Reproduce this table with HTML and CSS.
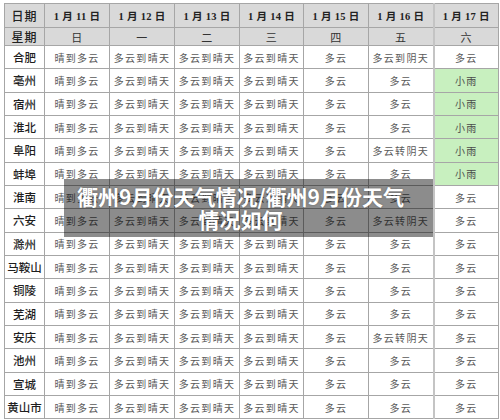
FILE: index.html
```html
<!DOCTYPE html>
<html lang="zh-CN">
<head>
<meta charset="utf-8">
<title>衢州9月份天气情况</title>
<link rel="stylesheet" href="styles.css">
</head>
<body>
<div class="page">
  <table class="weather">
    <colgroup>
      <col class="c-city">
      <col class="c-day"><col class="c-day"><col class="c-day"><col class="c-day4">
      <col class="c-day"><col class="c-day"><col class="c-day">
    </colgroup>
    <thead>
      <tr class="r-date">
        <th class="label">日期</th>
        <th>1 月 11 日</th><th>1 月 12 日</th><th>1 月 13 日</th><th>1 月 14 日</th>
        <th>1 月 15 日</th><th>1 月 16 日</th><th class="last">1 月 17 日</th>
      </tr>
      <tr class="r-week">
        <th class="label">星期</th>
        <th>日</th><th>一</th><th>二</th><th>三</th><th>四</th><th>五</th><th class="last">六</th>
      </tr>
    </thead>
    <tbody>
      <tr><th>合肥</th><td>晴到多云</td><td>多云到晴天</td><td>多云到晴天</td><td>多云到晴天</td><td>多云</td><td>多云到阴天</td><td class="last">多云</td></tr>
      <tr><th>亳州</th><td>晴到多云</td><td>多云到晴天</td><td>多云到晴天</td><td>多云到晴天</td><td>多云</td><td>多云</td><td class="last rain">小雨</td></tr>
      <tr><th>宿州</th><td>晴到多云</td><td>多云到晴天</td><td>多云到晴天</td><td>多云到晴天</td><td>多云</td><td>多云</td><td class="last rain">小雨</td></tr>
      <tr><th>淮北</th><td>晴到多云</td><td>多云到晴天</td><td>多云到晴天</td><td>多云到晴天</td><td>多云</td><td>多云</td><td class="last rain">小雨</td></tr>
      <tr><th>阜阳</th><td>晴到多云</td><td>多云到晴天</td><td>多云到晴天</td><td>多云到晴天</td><td>多云</td><td>多云转阴天</td><td class="last rain">小雨</td></tr>
      <tr><th>蚌埠</th><td>晴到多云</td><td>多云到晴天</td><td>多云到晴天</td><td>多云到晴天</td><td>多云</td><td>多云</td><td class="last rain">小雨</td></tr>
      <tr><th>淮南</th><td>晴到多云</td><td>多云到晴天</td><td>多云到晴天</td><td>多云到晴天</td><td>多云</td><td>多云</td><td class="last">多云</td></tr>
      <tr><th>六安</th><td>晴到多云</td><td>多云到晴天</td><td>多云到晴天</td><td>多云到晴天</td><td>多云</td><td>多云转阴天</td><td class="last">多云</td></tr>
      <tr><th>滁州</th><td>晴到多云</td><td>多云到晴天</td><td>多云到晴天</td><td>多云到晴天</td><td>多云</td><td>多云</td><td class="last">多云</td></tr>
      <tr><th>马鞍山</th><td>晴到多云</td><td>多云到晴天</td><td>多云到晴天</td><td>多云到晴天</td><td>多云</td><td>多云</td><td class="last">多云</td></tr>
      <tr><th>铜陵</th><td>晴到多云</td><td>多云到晴天</td><td>多云到晴天</td><td>多云到晴天</td><td>多云</td><td>多云</td><td class="last">多云</td></tr>
      <tr><th>芜湖</th><td>晴到多云</td><td>多云到晴天</td><td>多云到晴天</td><td>多云到晴天</td><td>多云</td><td>多云</td><td class="last">多云</td></tr>
      <tr><th>安庆</th><td>晴到多云</td><td>多云到晴天</td><td>多云到晴天</td><td>多云到晴天</td><td>多云</td><td>多云转阴天</td><td class="last">多云</td></tr>
      <tr><th>池州</th><td>晴到多云</td><td>多云到晴天</td><td>多云到晴天</td><td>多云到晴天</td><td>多云</td><td>多云</td><td class="last">多云</td></tr>
      <tr><th>宣城</th><td>晴到多云</td><td>多云到晴天</td><td>多云到晴天</td><td>多云到晴天</td><td>多云</td><td>多云</td><td class="last">多云</td></tr>
      <tr><th>黄山市</th><td>晴到多云</td><td>多云到晴天</td><td>多云到晴天</td><td>多云到晴天</td><td>多云</td><td>多云</td><td class="last">多云</td></tr>
    </tbody>
  </table>
  <div class="banner">
    <h1 class="banner-title">衢州9月份天气情况/衢州9月份天气情况如何</h1>
  </div>
</div>
</body>
</html>
```

FILE: styles.css
```css
html, body {
  margin: 0;
  padding: 0;
  background: #ffffff;
}

body {
  width: 500px;
  height: 420px;
  overflow: hidden;
  font-family: "Liberation Serif", "Noto Sans CJK SC", serif;
}

.page {
  position: relative;
  padding: 3px 0 0 4px;
}

.weather {
  border-collapse: collapse;
  table-layout: fixed;
  width: 494px;
  border: 1px solid #8a8a8a;
}

.c-city { width: 40px; }
.c-day { width: 65px; }
.c-day4 { width: 64px; }

.weather th,
.weather td {
  border: 1px solid #a6a6a6;
  padding: 0;
  text-align: center;
  vertical-align: middle;
  white-space: nowrap;
  overflow: hidden;
}

.weather .last {
  border-left: 2px solid #c4c4c4;
}

.r-date { height: 24px; }
.r-week { height: 17px; }
.weather tbody tr { height: 23.33px; }

thead th {
  background: #d9d9d9;
  color: #222222;
  font-size: 10.5px;
  font-weight: bold;
  letter-spacing: 0.3px;
}

.r-week th {
  font-weight: normal;
  font-size: 11px;
  color: #333333;
  font-family: "Noto Sans CJK SC", sans-serif;
}

thead th.label {
  font-family: "Noto Sans CJK SC", sans-serif;
  font-size: 12px;
  font-weight: 500;
  color: #222222;
  letter-spacing: 1px;
}

tbody th {
  background: #ffffff;
  font-family: "Noto Sans CJK SC", sans-serif;
  font-size: 11.5px;
  font-weight: 500;
  color: #1e1e1e;
  letter-spacing: 0;
}

tbody td {
  font-family: "Noto Sans CJK SC", sans-serif;
  font-size: 10px;
  color: #5a5a5a;
  letter-spacing: 1.3px;
}

tbody td.rain {
  background: #c8f0bf;
  color: #4a4a4a;
}

.banner {
  position: absolute;
  left: 64px;
  top: 179px;
  width: 369px;
  height: 58px;
  background: rgba(0, 0, 0, 0.45);
  display: flex;
  align-items: center;
  justify-content: center;
  padding: 0 26px 0 10px;
  box-sizing: border-box;
}

.banner-title {
  margin: 0;
  color: #ffffff;
  font-family: "Noto Sans CJK SC", sans-serif;
  font-size: 21px;
  font-weight: bold;
  line-height: 23px;
  text-align: center;
  text-shadow: 0 0 2px rgba(0, 0, 0, 0.3);
}
```
